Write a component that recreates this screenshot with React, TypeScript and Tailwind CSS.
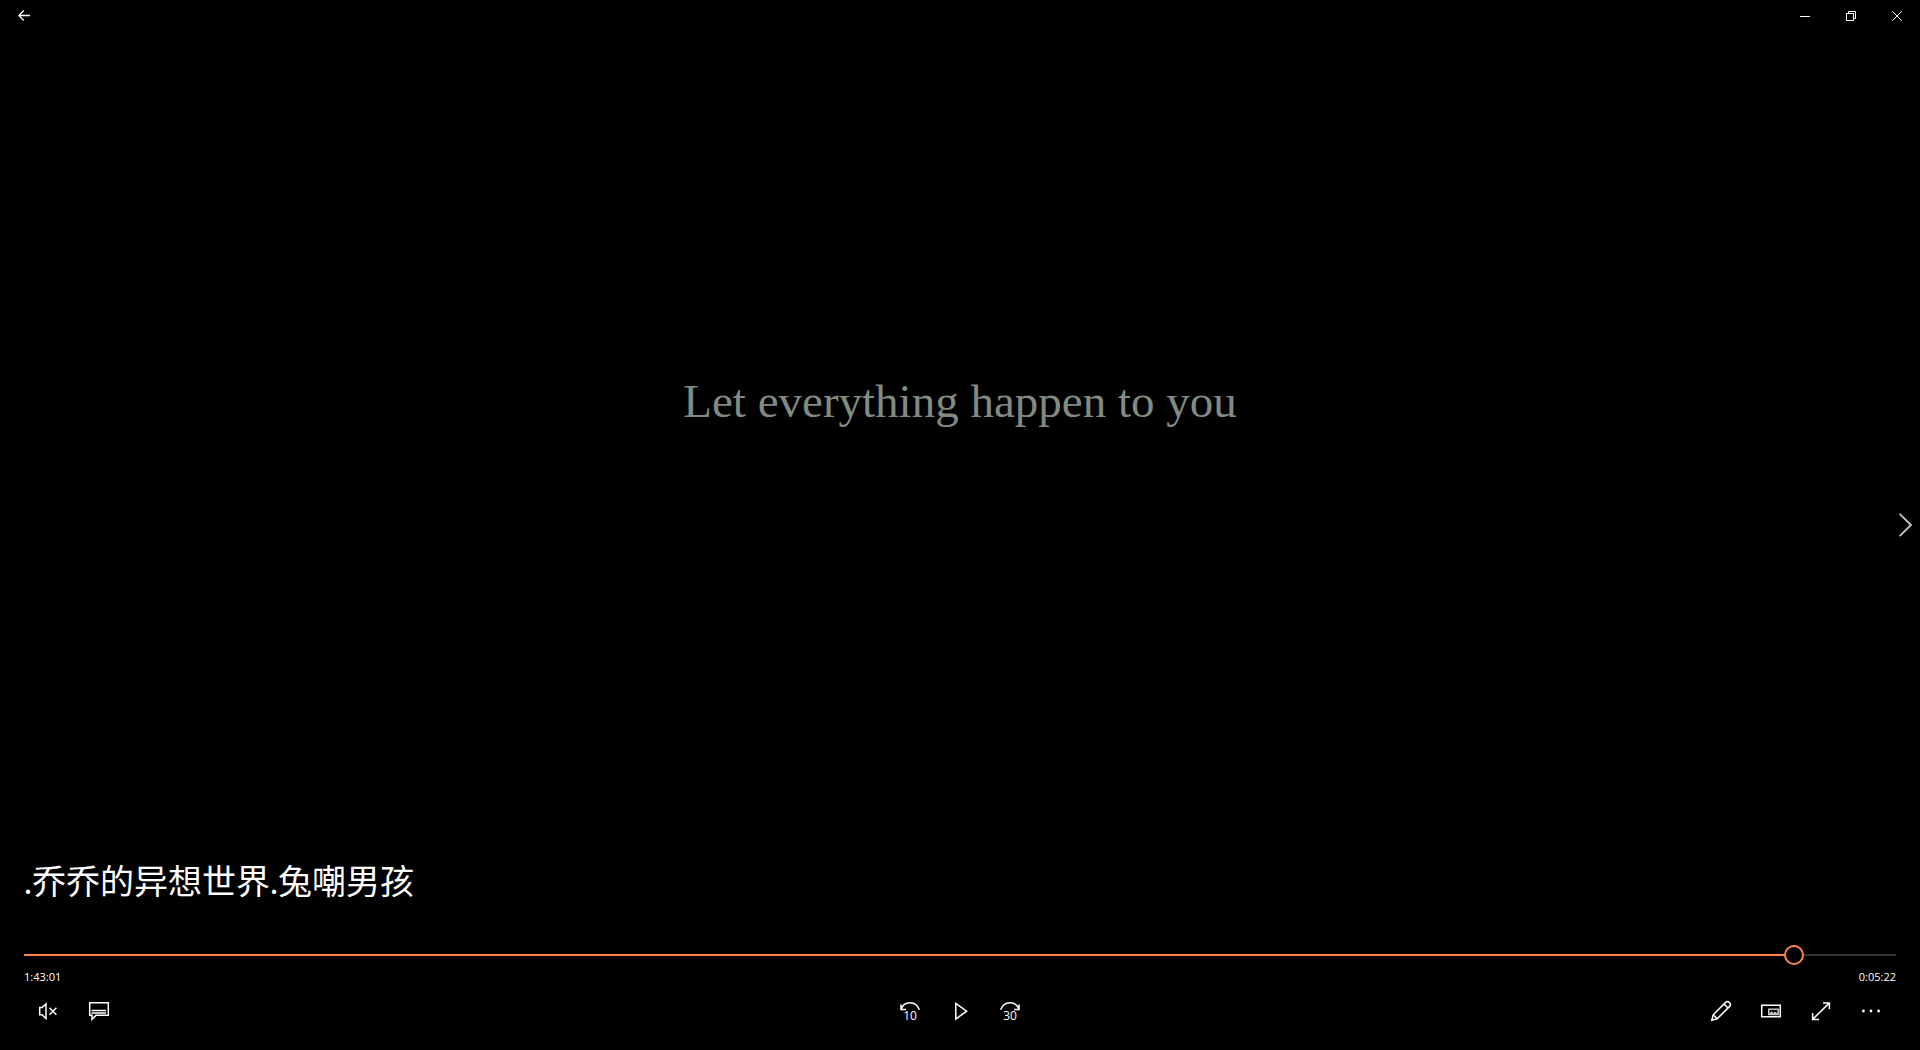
import { useState, type ReactNode } from "react";

const DURATION = 6503;

function formatTime(total: number) {
  const h = Math.floor(total / 3600);
  const m = Math.floor((total % 3600) / 60);
  const s = total % 60;
  return `${h}:${String(m).padStart(2, "0")}:${String(s).padStart(2, "0")}`;
}

function Icon({ children }: { children: ReactNode }) {
  return (
    <svg
      viewBox="0 0 20 20"
      className="size-5 overflow-visible"
      fill="none"
      stroke="currentColor"
      strokeWidth="1.5"
      aria-hidden="true"
    >
      {children}
    </svg>
  );
}

function ControlButton({ label, children }: { label: string; children: ReactNode }) {
  return (
    <button type="button" aria-label={label} className="flex h-12 w-[50px] items-center justify-center">
      <Icon>{children}</Icon>
    </button>
  );
}

function CaptionButton({ label, children }: { label: string; children: ReactNode }) {
  return (
    <button type="button" aria-label={label} className="flex h-8 w-[46px] items-center justify-center">
      <svg viewBox="0 0 10 10" className="size-2.5" fill="none" stroke="currentColor" aria-hidden="true">
        {children}
      </svg>
    </button>
  );
}

function TitleBar() {
  return (
    <header className="flex h-8 items-start justify-between">
      <button type="button" aria-label="Back" className="flex h-8 w-12 items-center justify-center">
        <svg
          viewBox="0 0 12 12"
          className="h-3 w-3"
          fill="none"
          stroke="currentColor"
          strokeWidth="1.3"
          aria-hidden="true"
        >
          <path d="M12 5.5H0.8M5.8 0.5L0.8 5.5L5.8 10.5" />
        </svg>
      </button>
      <div className="flex">
        <CaptionButton label="Minimize">
          <path d="M0 5.5H10" />
        </CaptionButton>
        <CaptionButton label="Restore">
          <path d="M0.5 2.5H7.5V9.5H0.5ZM2.5 2.5V0.5H9.5V7.5H7.5" />
        </CaptionButton>
        <CaptionButton label="Close">
          <path d="M0.2 0.2L9.8 9.8M9.8 0.2L0.2 9.8" />
        </CaptionButton>
      </div>
    </header>
  );
}

function SeekBar({ value, onChange }: { value: number; onChange: (v: number) => void }) {
  const percent = (value / DURATION) * 100;
  return (
    <input
      type="range"
      aria-label="Seek"
      min={0}
      max={DURATION}
      value={value}
      onChange={(e) => onChange(Number(e.target.value))}
      style={{
        backgroundImage: `linear-gradient(to right, #ff8552 ${percent}%, #333333 ${percent}%)`,
      }}
      className="block h-5 w-full cursor-pointer appearance-none bg-transparent bg-[length:100%_2px] bg-center bg-no-repeat outline-none [&::-webkit-slider-thumb]:size-5 [&::-webkit-slider-thumb]:appearance-none [&::-webkit-slider-thumb]:rounded-full [&::-webkit-slider-thumb]:border-2 [&::-webkit-slider-thumb]:border-[#ff8552] [&::-webkit-slider-thumb]:bg-black"
    />
  );
}

function Controls() {
  return (
    <div className="grid grid-cols-3 items-center">
      <div className="flex">
        <ControlButton label="Unmute">
          <path d="M0.7 6.5H3L7 2.9V17.5L3 13.8H0.7Z" />
          <path d="M10.5 6.8L17.4 13.7M17.4 6.8L10.5 13.7" />
        </ControlButton>
        <ControlButton label="Subtitles">
          <path d="M0.7 1.7H19.3V14.3H7L3 18.4V14.3H0.7Z" />
          <path d="M2.5 9.5H17M2.5 12H17" strokeWidth="1.3" />
        </ControlButton>
      </div>
      <div className="flex justify-center">
        <ControlButton label="Skip back 10 seconds">
          <path d="M1 8.5C4 -0.7 16 -0.7 19.4 8.8M1 3.4V8.6H6" />
          <text
            x="10"
            y="19"
            textAnchor="middle"
            stroke="none"
            fill="currentColor"
            className="font-['Open_Sans',sans-serif] text-[12px]"
          >
            10
          </text>
        </ControlButton>
        <ControlButton label="Play">
          <path d="M5.8 2.4L16.6 10.2L5.8 18Z" />
        </ControlButton>
        <ControlButton label="Skip forward 30 seconds">
          <path d="M19 8.5C16 -0.7 4 -0.7 0.6 8.8M19 3.4V8.6H14" />
          <text
            x="10"
            y="19"
            textAnchor="middle"
            stroke="none"
            fill="currentColor"
            className="font-['Open_Sans',sans-serif] text-[12px]"
          >
            30
          </text>
        </ControlButton>
      </div>
      <div className="flex justify-end">
        <ControlButton label="Edit">
          <path d="M0.8 19.2L2.2 13.8L14.6 1.4C15.8 0.2 17.2 0.3 18.4 1.5C19.7 2.8 19.8 4.2 18.6 5.4L6.2 17.8Z" />
          <path d="M13 3L17 7M2.2 13.8L6.2 17.8" />
        </ControlButton>
        <ControlButton label="Play in mini view">
          <path d="M0.7 4.2H19.3V15.8H0.7Z" />
          <path d="M7.8 8.2H17.2V13.4H7.8Z" stroke="#c0c0c0" strokeWidth="1.6" />
          <path d="M8.6 12.9L10.6 10.8L12.4 12.4L14 11L16.4 12.9Z" stroke="#c0c0c0" strokeWidth="1" fill="#c0c0c0" />
        </ControlButton>
        <ControlButton label="Full screen">
          <path d="M1.6 18.4L18.4 1.9M12 1.9H18.4V8.3M1.6 12V18.4H8" />
        </ControlButton>
        <ControlButton label="More">
          <g stroke="none" fill="currentColor">
            <circle cx="2.4" cy="10" r="1.4" />
            <circle cx="10" cy="10" r="1.4" />
            <circle cx="17.6" cy="10" r="1.4" />
          </g>
        </ControlButton>
      </div>
    </div>
  );
}

export default function App() {
  const [position, setPosition] = useState(6181);
  return (
    <div className="relative flex min-h-screen flex-col bg-black text-white">
      <TitleBar />
      <main className="flex flex-1 flex-col pt-[340px]">
        <p className="text-center font-['Liberation_Serif',serif] text-[47px] leading-[58px] text-[#818b81]">
          Let everything happen to you
        </p>
      </main>
      <button
        type="button"
        aria-label="Next"
        className="absolute top-1/2 right-0 flex h-12 w-7 -translate-y-1/2 items-center justify-center"
      >
        <svg viewBox="0 0 14 24" className="h-6 w-3.5" fill="none" stroke="#c8c8c8" strokeWidth="1.8" aria-hidden="true">
          <path d="M0.6 0.8L12 12L0.6 23.2" />
        </svg>
      </button>
      <footer className="px-6 pb-[15px]">
        <h1 className="font-[Lato,'Noto_Sans_CJK_SC',sans-serif] text-[34px] leading-[48px]">
          .乔乔的异想世界.兔嘲男孩
        </h1>
        <div className="pt-10">
          <SeekBar value={position} onChange={setPosition} />
        </div>
        <div className="flex justify-between pt-1 pb-0.5 font-['Open_Sans',sans-serif] text-[11px] leading-4">
          <span>{formatTime(position)}</span>
          <span>{formatTime(DURATION - position)}</span>
        </div>
        <Controls />
      </footer>
    </div>
  );
}
